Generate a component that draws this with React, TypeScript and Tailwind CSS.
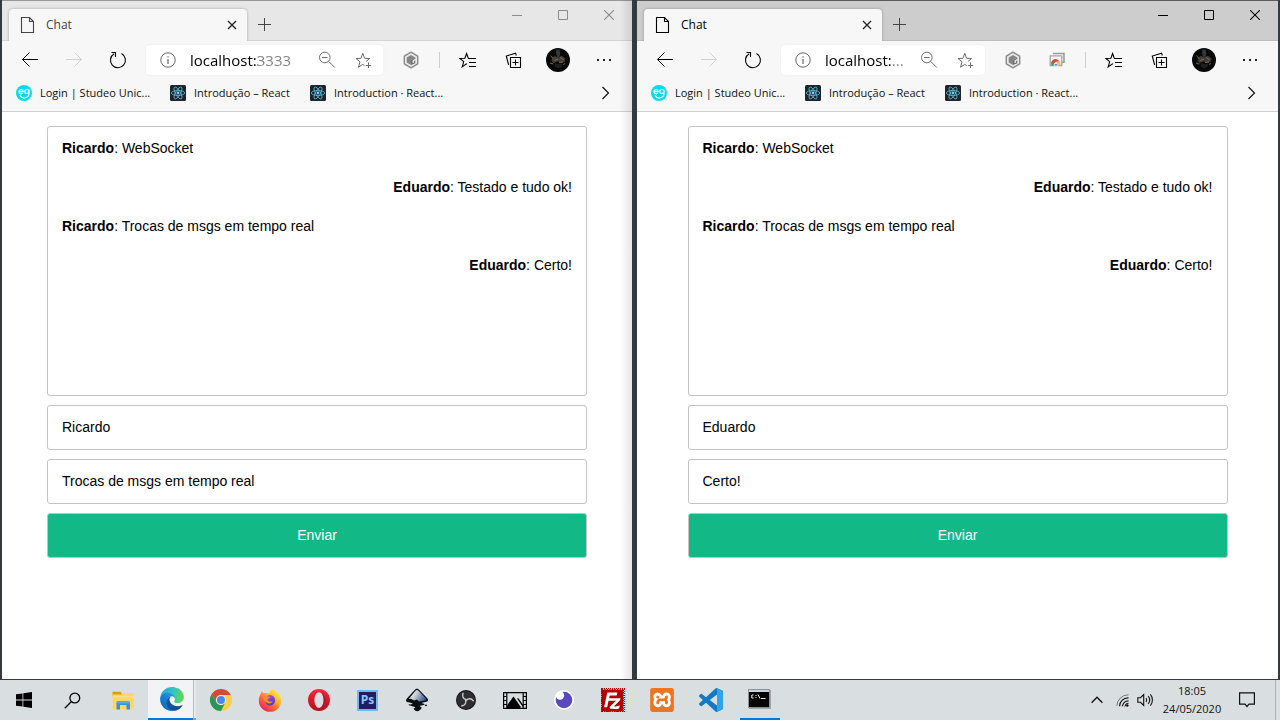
import type { ReactNode } from "react";
import { SiFilezilla, SiXampp } from "react-icons/si";

type Message = { author: string; text: string; own: boolean };

type ChatWindow = {
  active: boolean;
  url: string;
  hasCastExtension: boolean;
  user: string;
  draft: string;
};

const messages: Message[] = [
  { author: "Ricardo", text: "WebSocket", own: false },
  { author: "Eduardo", text: "Testado e tudo ok!", own: true },
  { author: "Ricardo", text: "Trocas de msgs em tempo real", own: false },
  { author: "Eduardo", text: "Certo!", own: true },
];

/* ---------- toolbar icons ---------- */

function PageIcon() {
  return (
    <svg width="16" height="18" viewBox="0 0 16 18" fill="none" stroke="currentColor" strokeWidth="1.1" aria-hidden="true">
      <path d="M1.5 1.5h8l4 4v11h-12z" />
      <path d="M9.5 1.5v4h4" />
    </svg>
  );
}

function CloseTabIcon() {
  return (
    <svg width="10" height="10" viewBox="0 0 10 10" fill="none" stroke="currentColor" strokeWidth="1.3" aria-hidden="true">
      <path d="M1 1l8 8M9 1L1 9" />
    </svg>
  );
}

function PlusIcon() {
  return (
    <svg width="13" height="13" viewBox="0 0 13 13" fill="none" stroke="currentColor" strokeWidth="1" aria-hidden="true">
      <path d="M6.5 0v13M0 6.5h13" />
    </svg>
  );
}

function ArrowIcon({ flipped = false }: { flipped?: boolean }) {
  return (
    <svg width="18" height="16" viewBox="0 0 18 16" fill="none" stroke="currentColor" strokeWidth="1" aria-hidden="true">
      {flipped ? <path d="M1 7.500h15.500M9.500.500l7 7-7 7" /> : <path d="M17 7.500H1.500M8.500.500l-7 7 7 7" />}
    </svg>
  );
}

function ReloadIcon() {
  return (
    <svg width="18" height="18" viewBox="0 0 18 18" fill="none" stroke="currentColor" strokeWidth="1.1" aria-hidden="true">
      <path d="M12.500 2.600A7.500 7.500 0 1 1 5.200 2.700" />
      <path d="M2.500 1.500h4v4.500" />
    </svg>
  );
}

function InfoIcon() {
  return (
    <svg width="16" height="16" viewBox="0 0 16 16" fill="none" stroke="#666" strokeWidth="1" aria-hidden="true">
      <circle cx="8" cy="8" r="7.200" />
      <path d="M8 7v5M8 4.300v1.300" strokeWidth="1.200" />
    </svg>
  );
}

function ZoomOutIcon() {
  return (
    <svg width="18" height="18" viewBox="0 0 18 18" fill="none" stroke="#6b6b6b" strokeWidth="1" aria-hidden="true">
      <circle cx="6.800" cy="6.500" r="5.300" />
      <path d="M10.800 10.500l6 6M4 6.500h5.600" />
    </svg>
  );
}

function AddFavoriteIcon() {
  return (
    <svg width="17" height="17" viewBox="0 0 17 17" fill="none" stroke="#6b6b6b" strokeWidth="1" aria-hidden="true">
      <path d="M9.500 13.500l-1.700-1.100L3.500 15.200l1.500-5.400L1 6.500l5-.2L7.800 1.300l1.800 5 5 .2-3.500 2.900" />
      <path d="M13.500 10.500v5.500M10.800 13.500h5.400" />
    </svg>
  );
}

function HexIcon() {
  return (
    <svg width="16" height="18" viewBox="0 0 16 18" fill="none" aria-hidden="true">
      <path d="M8 1.200l6.700 3.900v7.800L8 16.800l-6.700-3.900V5.100z" fill="#e9e9e9" stroke="#8a8a8a" strokeWidth="1.400" strokeLinejoin="round" />
      <path d="M8 4l4.300 2.500L8 9v5L3.700 11.500v-5z" fill="#868686" />
      <path d="M8 9l4.300-2.500v1.300L9.500 9.400v2.900l1.600-.9V10l1.200-.7v2.900L8 14z" fill="#6f6f6f" />
    </svg>
  );
}

function CastIcon() {
  return (
    <svg width="16" height="16" viewBox="0 0 16 16" fill="none" aria-hidden="true">
      <path d="M4 1.500h11v8.800h-2" stroke="#9a9a9a" strokeWidth="1.500" />
      <path d="M1.200 3.800h11.600v9.700H1.200z" fill="#f4f4f4" stroke="#a5a5a5" strokeWidth="1.300" />
      <path d="M2.900 13.500a4.200 4.200 0 0 1 .9-5.400 4.200 4.200 0 0 1 6.700 1.600H7z" fill="#e3453a" />
      <path d="M2.900 13.500a4.200 4.200 0 0 1 .2-3.800l2.700 3.800z" fill="#26a65b" />
      <path d="M8 9.500h2.800a4.200 4.200 0 0 1 .2 4H8z" fill="#f5c22e" />
      <path d="M4.800 13.800a2.200 2.200 0 0 1 4.400 0z" fill="#3e7fe8" stroke="#fff" strokeWidth=".6" />
    </svg>
  );
}

function FavoritesIcon() {
  return (
    <svg width="18" height="17" viewBox="0 0 18 17" fill="none" stroke="currentColor" strokeWidth="1.100" aria-hidden="true">
      <path d="M8 12.300l-.6-.4-4.200 3 1.500-5.300L.9 6.500l5-.2 1.700-4.800 1.600 4.500" />
      <path d="M9 6.500h8M10 10.500h7M10 14.500h7" />
    </svg>
  );
}

function CollectionsIcon() {
  return (
    <svg width="17" height="17" viewBox="0 0 17 17" fill="none" stroke="currentColor" strokeWidth="1.100" aria-hidden="true">
      <path d="M5.500 5.500h10v10h-10z" />
      <path d="M10.500 7.500v6M7.500 10.500h6" />
      <path d="M3.600 12.800L1.300 4l9.300-2.800.7 2.300" />
    </svg>
  );
}

function Avatar() {
  return (
    <svg width="24" height="24" viewBox="0 0 24 24" aria-hidden="true">
      <circle cx="12" cy="12" r="12" fill="#080809" />
      <path d="M10.500 1.500h3l.8 4-.9 3.500h-2.200l-1.200-4z" fill="#34383a" />
      <path d="M6 9.500l3-1.500 3 1.500 4-1.800 3.500 3-1 3-3.500 1-3.500-1.500-4 1.800-2-2z" fill="#443b35" />
      <path d="M9 15l3.500 1 3.500-.5-.5 3.500-3.500 1.500-3-2z" fill="#1f1d1d" />
      <path d="M4.500 7.500l2.500 3M8.500 12.500l3.500-1.500M14 9.500l3.500 2M13 14.500l4-.5M4 15l3.500 1M17 16.500l2-1" stroke="#8c7a6a" strokeWidth=".8" />
    </svg>
  );
}

function ChevronIcon() {
  return (
    <svg width="9" height="14" viewBox="0 0 9 14" fill="none" stroke="currentColor" strokeWidth="1.200" aria-hidden="true">
      <path d="M1.500 1l6 6-6 6" />
    </svg>
  );
}

function StudeoIcon() {
  return (
    <svg width="16" height="16" viewBox="0 0 16 16" className="shrink-0" aria-hidden="true">
      <circle cx="8" cy="8" r="8" fill="#08d9ee" />
      <g fill="none" stroke="#fff" strokeWidth="1.200" strokeLinecap="round">
        <path d="M3 6.700h4.200a2.100 2.100 0 1 0-.9 1.700" />
        <circle cx="10.900" cy="6.500" r="2" />
        <path d="M4.300 10.600a4.600 4.600 0 0 0 8.600-2.600V5" />
      </g>
    </svg>
  );
}

function ReactIcon() {
  return (
    <svg width="16" height="16" viewBox="0 0 16 16" className="shrink-0" aria-hidden="true">
      <rect width="16" height="16" rx="1.500" fill="#20232a" />
      <g fill="none" stroke="#58bcd8" strokeWidth=".8">
        <ellipse cx="8" cy="8" rx="6.700" ry="2.500" />
        <ellipse cx="8" cy="8" rx="6.700" ry="2.500" transform="rotate(60 8 8)" />
        <ellipse cx="8" cy="8" rx="6.700" ry="2.500" transform="rotate(120 8 8)" />
      </g>
      <circle cx="8" cy="8" r="1.400" fill="#61dafb" />
    </svg>
  );
}

/* ---------- browser window ---------- */

const bookmarks = [
  { label: "Login | Studeo Unic...", icon: <StudeoIcon />, width: "w-[154px]" },
  { label: "Introdução – React", icon: <ReactIcon />, width: "w-[140px]" },
  { label: "Introduction · React...", icon: <ReactIcon />, width: "w-[140px]" },
];

function TitleBar({ active }: { active: boolean }) {
  return (
    <header
      className={
        active
          ? "flex h-[41px] items-start border-t border-b border-t-[#5c5c5e] border-b-[#bdbdbd] bg-[#cdcdcd] text-black"
          : "flex h-[41px] items-start border-t border-b border-t-[#979797] border-b-[#d4d4d4] bg-[#e7e7e7] text-[#444]"
      }
    >
      <div className="mt-2 ml-[7px] flex h-8 w-[238px] shrink-0 items-center rounded-t-[4px] bg-[#f7f7f7] pr-[10px] pl-[11px] shadow-[0_0_3px_rgba(0,0,0,0.3)] [clip-path:inset(-4px_-4px_0_-4px)]">
        <PageIcon />
        <span className="ml-[10px] flex-1 text-[12px]">Chat</span>
        <button type="button" aria-label="Fechar guia" className="text-[#222]">
          <CloseTabIcon />
        </button>
      </div>
      <button type="button" aria-label="Nova guia" className="mt-[17px] ml-[11px] text-[#444]">
        <PlusIcon />
      </button>
      <div className={active ? "ml-auto flex text-black" : "ml-auto flex text-[#8b8b8b]"}>
        <button type="button" aria-label="Minimizar" className="flex h-7 w-[46px] items-center justify-center">
          <svg width="10" height="10" viewBox="0 0 10 10" stroke="currentColor" aria-hidden="true">
            <path d="M0 5.500h10" />
          </svg>
        </button>
        <button type="button" aria-label="Maximizar" className="flex h-7 w-[46px] items-center justify-center">
          <svg width="10" height="10" viewBox="0 0 10 10" fill="none" stroke="currentColor" aria-hidden="true">
            <path d="M.5.5h9v9h-9z" />
          </svg>
        </button>
        <button type="button" aria-label="Fechar" className="flex h-7 w-[46px] items-center justify-center">
          <svg width="10" height="10" viewBox="0 0 10 10" stroke="currentColor" strokeWidth="1.100" aria-hidden="true">
            <path d="M0 0l10 10M10 0L0 10" />
          </svg>
        </button>
      </div>
    </header>
  );
}

function ToolButton({ label, width, children }: { label: string; width: string; children: ReactNode }) {
  return (
    <button type="button" aria-label={label} className={`flex h-8 shrink-0 items-center justify-center ${width}`}>
      {children}
    </button>
  );
}

function Toolbar({ url, hasCastExtension }: { url: string; hasCastExtension: boolean }) {
  return (
    <div className="flex h-[38px] items-center bg-[#f7f7f7] pr-[5px] pl-[6px] text-black">
      <ToolButton label="Voltar" width="w-11">
        <ArrowIcon />
      </ToolButton>
      <button type="button" disabled aria-label="Avançar" className="flex h-8 w-11 shrink-0 items-center justify-center text-[#d2d2d2]">
        <ArrowIcon flipped />
      </button>
      <ToolButton label="Atualizar" width="w-11">
        <ReloadIcon />
      </ToolButton>
      <div className="mx-[6px] flex h-[30px] min-w-0 flex-1 items-center rounded-[4px] bg-white pr-[11px] pl-[14px] shadow-[0_0_2px_rgba(0,0,0,0.08)]">
        <InfoIcon />
        <input
          aria-label="Endereço"
          defaultValue={url}
          className="mx-[14px] w-0 min-w-0 flex-1 bg-linear-to-r from-black from-[68px] to-[#808080] to-[68px] bg-clip-text text-[15px] text-transparent outline-none"
        />
        <div className="flex shrink-0 items-center gap-[19px]">
          <ZoomOutIcon />
          <AddFavoriteIcon />
        </div>
      </div>
      <ToolButton label="Extensão" width="w-11">
        <HexIcon />
      </ToolButton>
      {hasCastExtension && (
        <ToolButton label="Transmitir" width="w-11">
          <CastIcon />
        </ToolButton>
      )}
      <span className="mr-[5px] ml-[6px] h-4 w-px shrink-0 bg-[#cfcfcf]" />
      <ToolButton label="Favoritos" width="w-[46px]">
        <FavoritesIcon />
      </ToolButton>
      <ToolButton label="Coleções" width="w-11">
        <CollectionsIcon />
      </ToolButton>
      <ToolButton label="Perfil" width="w-[46px]">
        <Avatar />
      </ToolButton>
      <ToolButton label="Configurações e mais" width="w-[46px]">
        <svg width="14" height="2" viewBox="0 0 14 2" fill="#222" aria-hidden="true">
          <path d="M0 0h2v2H0zM6 0h2v2H6zM12 0h2v2h-2z" />
        </svg>
      </ToolButton>
    </div>
  );
}

function BookmarkBar() {
  return (
    <nav className="flex h-[33px] items-center border-b border-[#d0d0d0] bg-[#f7f7f7] pr-[22px] pb-1 pl-[14px] text-[#111]">
      {bookmarks.map((bookmark) => (
        <a key={bookmark.label} href="#" className={`flex shrink-0 items-center gap-2 whitespace-nowrap text-[11px] ${bookmark.width}`}>
          {bookmark.icon}
          {bookmark.label}
        </a>
      ))}
      <button type="button" aria-label="Mais favoritos" className="ml-auto">
        <ChevronIcon />
      </button>
    </nav>
  );
}

function Chat({ user, draft }: { user: string; draft: string }) {
  const field = "h-[45px] w-full rounded-[3px] border border-[#c4c4c4] bg-white px-[14px] pb-[2px] text-black outline-none";
  return (
    <form
      onSubmit={(event) => event.preventDefault()}
      className="mx-auto mt-[14px] flex w-full max-w-[540px] flex-col gap-[9px] font-['Liberation_Sans',Arial,sans-serif] text-[14px] text-black"
    >
      <div className="h-[270px] rounded-[3px] border border-[#c4c4c4] px-[14px] py-[2px]">
        {messages.map((message) => (
          <p key={message.author + message.text} className={message.own ? "text-right leading-[39px]" : "leading-[39px]"}>
            <strong className="font-bold">{message.author}</strong>: {message.text}
          </p>
        ))}
      </div>
      <input aria-label="Usuário" defaultValue={user} className={field} />
      <input aria-label="Mensagem" defaultValue={draft} className={field} />
      <button type="submit" className="h-[45px] rounded-[3px] border border-[#c4c4c4] bg-[#12b886] text-white">
        Enviar
      </button>
    </form>
  );
}

function BrowserWindow({ active, url, hasCastExtension, user, draft }: ChatWindow) {
  return (
    <section className="relative flex min-w-0 flex-col overflow-hidden bg-white">
      <TitleBar active={active} />
      <Toolbar url={url} hasCastExtension={hasCastExtension} />
      <BookmarkBar />
      <Chat user={user} draft={draft} />
      {!active && (
        <div className="pointer-events-none absolute inset-y-0 right-0 w-3 bg-linear-to-r from-transparent to-black/10" />
      )}
    </section>
  );
}

/* ---------- taskbar ---------- */

function StartIcon() {
  return (
    <svg width="16" height="16" viewBox="0 0 16 16" fill="#000" aria-hidden="true">
      <path d="M0 2.300l6.500-.9v6.200H0zM7.300 1.200L16 0v7.600H7.300zM0 8.400h6.500v6.200L0 13.700zM7.300 8.400H16V16l-8.700-1.200z" />
    </svg>
  );
}

function SearchIcon() {
  return (
    <svg width="17" height="17" viewBox="0 0 17 17" fill="none" stroke="#000" strokeWidth="1.300" aria-hidden="true">
      <circle cx="10.800" cy="6" r="4.900" />
      <path d="M7.200 9.700L.8 16.200" />
    </svg>
  );
}

function ExplorerIcon() {
  return (
    <svg width="22" height="19" viewBox="0 0 22 19" aria-hidden="true">
      <path d="M.5.700h8.200l1.300 2.500v3H.5z" fill="#dc9c12" />
      <path d="M.5 3.400h9l1-1.400h11v16H.5z" fill="#fdd663" />
      <path d="M.5 5h21v1.500H.5z" fill="#ffe08a" />
      <path d="M4.500 18.500v-6.800a1.500 1.500 0 0 1 1.500-1.500h10.500a1.500 1.500 0 0 1 1.500 1.500v6.800h-3.500V14h-6.500v4.500z" fill="#3b8ed8" />
      <path d="M4.500 12.500v-.8a1.500 1.500 0 0 1 1.500-1.500h10.500a1.500 1.500 0 0 1 1.500 1.500v.8z" fill="#5aa9e6" />
    </svg>
  );
}

function EdgeIcon() {
  return (
    <svg width="24" height="24" viewBox="0 0 256 258" aria-hidden="true">
      <defs>
        <linearGradient id="edge-base" x1="63" y1="177" x2="241" y2="177" gradientUnits="userSpaceOnUse">
          <stop offset="0" stopColor="#0c59a4" />
          <stop offset="1" stopColor="#114a8b" />
        </linearGradient>
        <linearGradient id="edge-swirl" x1="157" y1="99" x2="45" y2="221" gradientUnits="userSpaceOnUse">
          <stop offset="0" stopColor="#1b9de2" />
          <stop offset=".5" stopColor="#1681cf" />
          <stop offset="1" stopColor="#0f6ec0" />
        </linearGradient>
        <linearGradient id="edge-wave" x1="10" y1="70" x2="250" y2="120" gradientUnits="userSpaceOnUse">
          <stop offset="0" stopColor="#2ba4dc" />
          <stop offset=".5" stopColor="#36c4c0" />
          <stop offset="1" stopColor="#5fdb4e" />
        </linearGradient>
      </defs>
      <path fill="url(#edge-base)" d="M235.680 195.460a93.730 93.730 0 0 1-10.540 4.710 101.870 101.870 0 0 1-35.900 6.460c-47.320 0-88.540-32.550-88.540-74.320A31.480 31.480 0 0 1 117.130 105c-42.800 1.800-53.800 46.400-53.800 72.530 0 73.880 68.090 79 82.760 79 7.910 0 19.840-2.300 27-4.560l1.310-.44a128.340 128.340 0 0 0 66.600-50.400 4 4 0 0 0-5.320-5.640z" />
      <path fill="url(#edge-swirl)" d="M105.730 244.420A79.200 79.200 0 0 1 83 223.080a80.720 80.720 0 0 1 29.500-120.480c3.120-1.470 8.450-4.130 15.540-4a32.350 32.350 0 0 1 25.690 13 31.880 31.880 0 0 1 6.360 18.660c0-.21 24.460-79.600-80-79.600-43.900 0-80 41.660-80 78.210a130.150 130.150 0 0 0 12.110 56 128 128 0 0 0 156.380 67.110 75.550 75.550 0 0 1-62.780-8z" />
      <path fill="url(#edge-wave)" d="M152.330 149.860c-.81 1.050-3.300 2.500-3.300 5.660 0 2.610 1.700 5.120 4.720 7.230 14.380 10 41.490 8.680 41.560 8.680a59.560 59.560 0 0 0 30.270-8.350A61.380 61.380 0 0 0 256 110.240c.26-22.410-8-37.310-11.340-43.910C223.460 24.840 177.720 1 128 1A128 128 0 0 0 0 127.200c.48-36.540 36.800-66.050 80-66.050 3.500 0 23.460.34 42 10.070 16.340 8.580 24.900 18.940 30.850 29.210 6.180 10.670 7.280 24.150 7.280 29.520 0 5.370-2.740 13.330-7.800 19.910z" />
    </svg>
  );
}

function ChromeIcon() {
  return (
    <svg width="22" height="22" viewBox="0 0 22 22" aria-hidden="true">
      <circle cx="11" cy="11" r="11" fill="#fbcf47" />
      <path d="M1.470 5.500A11 11 0 0 1 20.530 5.500V6H11a5 5 0 0 0-4.300 7.500z" fill="#d64a3a" />
      <path d="M1.470 5.500A11 11 0 0 0 11 22l4.330-8.500a5 5 0 0 1-8.660 0z" fill="#24985a" />
      <circle cx="11" cy="11" r="5" fill="#f4f4f4" />
      <circle cx="11" cy="11" r="4" fill="#4b87ee" />
    </svg>
  );
}

function FirefoxIcon() {
  return (
    <svg width="24" height="24" viewBox="0 0 24 24" aria-hidden="true">
      <defs>
        <linearGradient id="fox-fire" x1="20" y1="3" x2="5" y2="21" gradientUnits="userSpaceOnUse">
          <stop offset="0" stopColor="#fff04a" />
          <stop offset=".35" stopColor="#ffb52a" />
          <stop offset=".65" stopColor="#ff6a35" />
          <stop offset="1" stopColor="#f0265f" />
        </linearGradient>
        <linearGradient id="fox-globe" x1="10" y1="7" x2="14" y2="17" gradientUnits="userSpaceOnUse">
          <stop offset="0" stopColor="#a44be0" />
          <stop offset="1" stopColor="#4b3fc0" />
        </linearGradient>
      </defs>
      <path d="M14.500.5c2 1.300 3 3 3.400 4.300.8-.1 1.300-.5 1.600-1 2.700 2.600 3.800 5.700 3.700 9A11.200 11.200 0 0 1 .8 12.500c0-2.700.8-4.700 1.800-6.200.2-1.200.7-2.300 1.500-3.200.1 1 .5 1.600 1 2.100.9-.3 2-.3 3 .1 1.200-.2 2.500-.2 3.500.2C11.900 3.500 12.800 1.700 14.500.5z" fill="url(#fox-fire)" />
      <circle cx="12" cy="12.300" r="5.200" fill="url(#fox-globe)" />
      <path d="M5.200 8.200c1.500-.7 3-.6 4.200.2l3.100.3c-.2 1.300-1.700 1.600-2.600 2.100-.5.900-.3 1.700.5 2.300 1.400 1 3 .2 4.300.5-1 1.700-3.300 2.400-5.200 1.500-2.800-1.300-4.500-3.700-4.300-6.900z" fill="#ff8a2b" />
    </svg>
  );
}

function OperaIcon() {
  return (
    <svg width="22" height="22" viewBox="0 0 22 22" aria-hidden="true">
      <defs>
        <linearGradient id="opera-red" x1="11" y1="0" x2="11" y2="22" gradientUnits="userSpaceOnUse">
          <stop offset="0" stopColor="#ff2438" />
          <stop offset="1" stopColor="#b30d20" />
        </linearGradient>
      </defs>
      <path fillRule="evenodd" fill="url(#opera-red)" d="M11 0a11 11 0 1 0 0 22 11 11 0 0 0 0-22zm0 3.200c2.700 0 4.600 3.400 4.600 7.800s-1.900 7.800-4.600 7.800S6.400 15.400 6.400 11 8.300 3.200 11 3.200z" />
      <path fill="#8f0f1c" opacity=".5" d="M11 3.200c4 0 6.500 3.500 6.500 7.800S15 18.800 11 18.800c2.700 0 4.600-3.400 4.600-7.800S13.700 3.200 11 3.200z" />
    </svg>
  );
}

function PhotoshopIcon() {
  return (
    <span className="flex size-[21px] items-center justify-center border-2 border-[#74b6f2] bg-[#241c62] font-['Open_Sans',sans-serif] text-[12px] leading-none font-bold text-[#8cc6ff]">
      Ps
    </span>
  );
}

function InkscapeIcon() {
  return (
    <svg width="24" height="24" viewBox="0 0 24 24" aria-hidden="true">
      <defs>
        <linearGradient id="ink-snow" x1="5" y1="4" x2="20" y2="13" gradientUnits="userSpaceOnUse">
          <stop offset="0" stopColor="#ffffff" />
          <stop offset=".45" stopColor="#b5bec9" />
          <stop offset="1" stopColor="#1f4f96" />
        </linearGradient>
      </defs>
      <path d="M12 .8c1 0 1.600.5 2.300 1.200l8 8.200c1.600 1.800.8 3-.8 3.600l-4.500 1c-.5.700 3 1 2.500 1.700-.8.900-4.200.8-4.500 1.500-.2.700 2.300 1 1.500 2.200-.8 1-2.500 3-4.300 3s-3.300-1.400-3.500-2.400c-.2-.9 2.300-.8 1.500-1.600-.9-.8-5-1-5.200-2.200-.1-1 3-.7 2.400-1.600-.6-.8-5-.9-6-2-.7-.9-.3-2 .5-3l7.800-8.400C10.400 1.300 11 .8 12 .8z" fill="#0c0e12" />
      <path d="M12 2c.5 0 1 .3 1.500.8l7.500 7.900c.7.900.1 1.600-1 1.900l-6 .9-2-2-3 1-3-1.700L3.800 11l6.700-8.200c.5-.5 1-.8 1.500-.8z" fill="url(#ink-snow)" />
      <path d="M19.500 17l2-.6.8 1-1.600.9zM3.500 16.500l1.500-.3.300 1-1.200.3z" fill="#0c0e12" />
    </svg>
  );
}

function ObsIcon() {
  return (
    <svg width="20" height="20" viewBox="0 0 20 20" aria-hidden="true">
      <circle cx="10" cy="10" r="10" fill="#111113" />
      <circle cx="10" cy="10" r="9" fill="#2e2d30" />
      <g fill="none" stroke="#c9c9cb" strokeWidth="1.400" strokeLinecap="round">
        <path d="M10 9.500C7.300 9 5.900 6.500 7 3.300" />
        <path d="M10 9.500C7.300 9 5.900 6.500 7 3.300" transform="rotate(120 10 10)" />
        <path d="M10 9.500C7.300 9 5.900 6.500 7 3.300" transform="rotate(240 10 10)" />
      </g>
    </svg>
  );
}

function MoviesIcon() {
  return (
    <svg width="24" height="17" viewBox="0 0 24 17" aria-hidden="true">
      <path d="M.6.600h22.800v15.800H.6z" fill="none" stroke="#000" strokeWidth="1.200" />
      <path d="M3.800.500v16M20.200.500v16" stroke="#000" strokeWidth="1.200" />
      <path d="M.5 4.500h3.300M.5 8.500h3.300M.5 12.500h3.300M20.200 4.500h3.300M20.200 8.500h3.300M20.200 12.500h3.300" stroke="#000" strokeWidth="1.200" />
      <path d="M4 13.500L10.500 4.500l7 10v2H4z" />
      <path d="M14 6.500l1.500-.2 4.800 7v2.500z" />
    </svg>
  );
}

function InsomniaIcon() {
  return (
    <svg width="20" height="20" viewBox="0 0 20 20" aria-hidden="true">
      <circle cx="10" cy="10" r="10" fill="#fff" />
      <circle cx="10" cy="10" r="8.300" fill="#5849be" />
      <circle cx="6" cy="5.500" r="4.200" fill="#fff" />
    </svg>
  );
}

function FileZillaIcon() {
  return (
    <span className="flex size-6 items-center justify-center border border-dotted border-[#b30000] bg-white">
      <SiFilezilla className="size-[23px] shrink-0 text-[#b30000]" aria-hidden="true" />
    </span>
  );
}

function XamppIcon() {
  return (
    <span className="flex size-6 items-center justify-center rounded-[4px] bg-white">
      <SiXampp className="size-6 text-[#ee7420]" aria-hidden="true" />
    </span>
  );
}

function VsCodeIcon() {
  return (
    <svg width="24" height="24" viewBox="0 0 24 24" aria-hidden="true">
      <path fill="#1279c2" d="M23.150 2.587L18.210.210a1.494 1.494 0 0 0-1.705.290l-9.460 8.630-4.120-3.128a.999.999 0 0 0-1.276.057L.327 7.261A1 1 0 0 0 .326 8.740L3.899 12 .326 15.260a1 1 0 0 0 .001 1.479L1.650 17.940a.999.999 0 0 0 1.276.057l4.120-3.128 9.460 8.630a1.492 1.492 0 0 0 1.704.290l4.942-2.377A1.500 1.500 0 0 0 24 20.060V3.939a1.500 1.500 0 0 0-.850-1.352zm-5.146 14.861L10.826 12l7.178-5.448v10.896z" />
      <path fill="#2ea3f2" d="M23.150 2.587L18.210.210 18 .150V23.850l.210-.060 4.942-2.377A1.500 1.500 0 0 0 24 20.060V3.939a1.500 1.500 0 0 0-.850-1.352z" />
    </svg>
  );
}

function TerminalIcon() {
  return (
    <svg width="23" height="20" viewBox="0 0 23 20" aria-hidden="true">
      <rect x="1" y="1" width="22" height="19" fill="#000" opacity=".25" />
      <rect width="22" height="19" fill="#8d9296" />
      <rect x="1" y="1" width="20" height="2" fill="#cfd3d5" />
      <rect x="1" y="3" width="20" height="15" fill="#050505" />
      <path d="M5.500 6H3.800v3h1.700M7.500 6.500h1M7.500 8.500h1M10 5.500l2 4M13 9.500h4.500" fill="none" stroke="#e8e8e8" />
    </svg>
  );
}

const pinnedApps: { label: string; icon: ReactNode }[] = [
  { label: "Google Chrome", icon: <ChromeIcon /> },
  { label: "Firefox", icon: <FirefoxIcon /> },
  { label: "Opera", icon: <OperaIcon /> },
  { label: "Photoshop", icon: <PhotoshopIcon /> },
  { label: "Inkscape", icon: <InkscapeIcon /> },
  { label: "OBS Studio", icon: <ObsIcon /> },
  { label: "Filmes e TV", icon: <MoviesIcon /> },
  { label: "Insomnia", icon: <InsomniaIcon /> },
  { label: "FileZilla", icon: <FileZillaIcon /> },
  { label: "XAMPP", icon: <XamppIcon /> },
  { label: "Visual Studio Code", icon: <VsCodeIcon /> },
];

function Taskbar() {
  const slot = "flex h-full w-[49px] shrink-0 items-center justify-center";
  return (
    <footer className="flex h-10 shrink-0 items-center bg-[#d9dfe1]">
      <button type="button" aria-label="Iniciar" className="flex h-full w-12 shrink-0 items-center justify-center">
        <StartIcon />
      </button>
      <button type="button" aria-label="Pesquisar" className="mr-[2px] flex h-full w-12 shrink-0 items-center justify-center">
        <SearchIcon />
      </button>
      <button type="button" aria-label="Explorador de Arquivos" className={slot}>
        <ExplorerIcon />
      </button>
      <button type="button" aria-label="Microsoft Edge" className="flex h-full w-[49px] shrink-0 pl-px">
        <span className="flex h-full w-[45px] items-center justify-center border-b-2 border-[#0078d7] bg-[#f1f3f5] pl-[3px]">
          <EdgeIcon />
        </span>
        <span className="h-full w-[3px] border-b-2 border-l border-b-[#5aa6e0] border-l-[#b4bdc2] bg-[#e3e9ec]" />
      </button>
      {pinnedApps.map((app) => (
        <button key={app.label} type="button" aria-label={app.label} className={slot}>
          {app.icon}
        </button>
      ))}
      <button type="button" aria-label="Prompt de Comando" className={slot}>
        <span className="flex h-full w-10 items-center justify-center border-b-2 border-[#0078d7]">
          <TerminalIcon />
        </span>
      </button>

      <div className="ml-auto flex h-full items-center text-[#111]">
        <button type="button" aria-label="Mostrar ícones ocultos" className="mr-[13px]">
          <svg width="12" height="8" viewBox="0 0 12 8" fill="none" stroke="currentColor" strokeWidth="1.300" aria-hidden="true">
            <path d="M.6 6.800L6 1.200l5.400 5.600" />
          </svg>
        </button>
        <button type="button" aria-label="Rede" className="mr-2">
          <svg width="13" height="13" viewBox="0 0 13 13" fill="none" stroke="currentColor" aria-hidden="true">
            <path d="M.8 12A11.500 11.500 0 0 1 12.500.8" stroke="#777" />
            <path d="M3.600 12.300a8.500 8.500 0 0 1 8.900-8.500M6.500 12.300a5.800 5.800 0 0 1 6-5.500" strokeWidth="1.200" />
            <path d="M9 12.500A3.300 3.300 0 0 1 12.500 9.300" />
            <circle cx="11.300" cy="11.500" r="1.200" fill="currentColor" stroke="none" />
          </svg>
        </button>
        <button type="button" aria-label="Volume" className="mr-2">
          <svg width="17" height="14" viewBox="0 0 17 14" fill="none" stroke="currentColor" strokeWidth="1.100" aria-hidden="true">
            <path d="M.8 4.700h2.700L6.700 1.500v11L3.500 9.300H.8z" />
            <path d="M9 5a3.300 3.300 0 0 1 0 4M11.200 3.200a6 6 0 0 1 0 7.600M13.400 1.400a8.800 8.800 0 0 1 0 11.200" />
          </svg>
        </button>
        <time dateTime="2020-05-24T18:05" className="block w-[60px] text-center text-[11px] leading-[18px]">
          18:05
          <br />
          24/05/2020
        </time>
        <button type="button" aria-label="Notificações" className="mr-5 ml-[17px]">
          <svg width="16" height="16" viewBox="0 0 16 16" fill="none" stroke="currentColor" strokeWidth="1.200" aria-hidden="true">
            <path d="M.6.800h14.800v11.400H10L8 14.500l-2-2.300H.6z" />
          </svg>
        </button>
        <span className="h-full w-[5px] border-l border-[#aab2b6]" />
      </div>
    </footer>
  );
}

const windows: ChatWindow[] = [
  {
    active: false,
    url: "localhost:3333",
    hasCastExtension: false,
    user: "Ricardo",
    draft: "Trocas de msgs em tempo real",
  },
  {
    active: true,
    url: "localhost:...",
    hasCastExtension: true,
    user: "Eduardo",
    draft: "Certo!",
  },
];

export default function App() {
  return (
    <div className="flex h-screen flex-col overflow-hidden bg-[#343b3f] font-['Open_Sans','Noto_Sans',sans-serif]">
      <main className="grid min-h-0 flex-1 grid-cols-[630fr_641fr] gap-x-[5px] px-[2px] pb-px">
        {windows.map((item) => (
          <BrowserWindow key={item.user} {...item} />
        ))}
      </main>
      <Taskbar />
    </div>
  );
}
